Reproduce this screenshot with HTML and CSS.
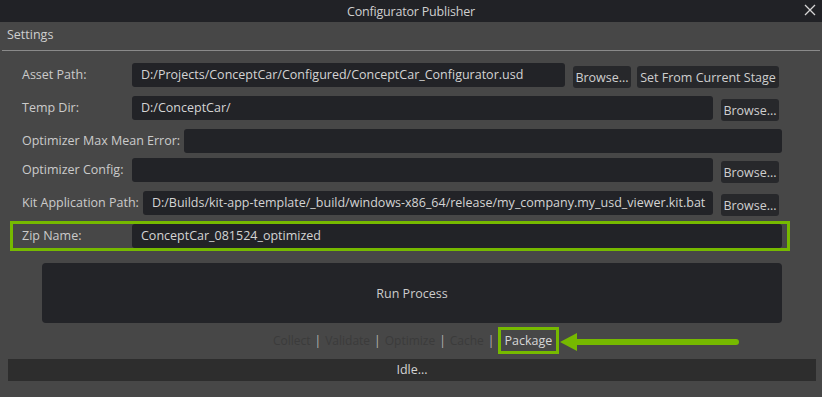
FILE: index.html
```html
<!DOCTYPE html>
<html>
<head>
<meta charset="utf-8">
<link rel="stylesheet" href="styles.css">
</head>
<body>
<div class="window">
  <div class="titlebar">
    <span class="title">Configurator Publisher</span>
    <svg class="close" width="12" height="12" viewBox="0 0 12 12"><path d="M1 1 L11 11 M11 1 L1 11" stroke="#d6d6d6" stroke-width="1.3" fill="none"/></svg>
  </div>
  <div class="section-header">Settings</div>
  <div class="form">
    <div class="row">
      <span class="label">Asset Path:</span>
      <div class="field">D:/Projects/ConceptCar/Configured/ConceptCar_Configurator.usd</div>
      <button class="btn">Browse...</button>
      <button class="btn btn-wide">Set From Current Stage</button>
    </div>
    <div class="row">
      <span class="label">Temp Dir:</span>
      <div class="field">D:/ConceptCar/</div>
      <button class="btn">Browse...</button>
    </div>
    <div class="row row-tight">
      <span class="label">Optimizer Max Mean Error:</span>
      <div class="field field-full"></div>
    </div>
    <div class="row">
      <span class="label">Optimizer Config:</span>
      <div class="field"></div>
      <button class="btn">Browse...</button>
    </div>
    <div class="row row-before-zip">
      <span class="label">Kit Application Path:</span>
      <div class="field">D:/Builds/kit-app-template/_build/windows-x86_64/release/my_company.my_usd_viewer.kit.bat</div>
      <button class="btn">Browse...</button>
    </div>
    <div class="row zip-row">
      <span class="label">Zip Name:</span>
      <div class="field field-full">ConceptCar_081524_optimized</div>
    </div>
  </div>
  <div class="run-wrap">
    <div class="run">Run Process</div>
  </div>
  <div class="steps">
    <span class="step off">Collect</span>
    <span class="sep">|</span>
    <span class="step off">Validate</span>
    <span class="sep">|</span>
    <span class="step off">Optimize</span>
    <span class="sep">|</span>
    <span class="step off">Cache</span>
    <span class="sep">|</span>
    <span class="step active">Package</span>
    <svg class="arrow" width="180" height="20" viewBox="0 0 180 20"><polygon points="0,10 17,1 17,19" fill="#76b900"/><line x1="16" y1="10" x2="176" y2="10" stroke="#76b900" stroke-width="6" stroke-linecap="round"/></svg>
  </div>
  <div class="status">Idle...</div>
</div>
</body>
</html>
```
FILE: styles.css
```css
html, body {
  margin: 0;
  padding: 0;
  background: #474747;
}
body {
  font-family: "Open Sans", "Noto Sans", sans-serif;
  font-size: 12.5px;
  color: #cfcfcf;
  width: 822px;
  height: 397px;
  overflow: hidden;
}
.window {
  display: flex;
  flex-direction: column;
}
.titlebar {
  height: 22px;
  background: #212226;
  display: flex;
  align-items: center;
  justify-content: center;
  position: relative;
}
.title {
  font-size: 12.5px;
  color: #cfcfcf;
  letter-spacing: -0.2px;
}
.close {
  position: absolute;
  right: 6px;
  top: 4px;
}
.section-header {
  height: 28px;
  line-height: 26px;
  border-bottom: 1px solid #8a8a8a;
  margin: 0 2px;
  padding-left: 5px;
}
.form {
  padding: 12px 40px 0 0;
  display: flex;
  flex-direction: column;
}
.row {
  display: flex;
  align-items: flex-start;
  height: 24px;
  margin-bottom: 9px;
  padding-left: 22px;
}
.row-tight { margin-bottom: 5px; }
.row-before-zip { margin-bottom: 6px; }
.label {
  min-width: 110px;
  box-sizing: border-box;
  padding-right: 4px;
  line-height: 24px;
  white-space: nowrap;
  color: #cbcbcb;
}
.field {
  flex: 1;
  height: 24px;
  line-height: 24px;
  background: #222327;
  border-radius: 3px;
  padding-left: 9px;
  margin-right: 8px;
  color: #d4d4d4;
  white-space: nowrap;
  overflow: hidden;
}
.field-full { margin-right: 0; }
.btn {
  font-family: inherit;
  font-size: 12.5px;
  color: #cfcfcf;
  background: #27282b;
  border: none;
  border-radius: 3px;
  height: 22px;
  width: 58px;
  padding: 0;
  margin-top: 3px;
  margin-right: 3px;
}
.row .btn + .btn { margin-left: 3px; }
.btn-wide { width: 142px; }
.zip-row {
  margin: 0 -8px 0 10px;
  border: 3px solid #76b900;
  padding-left: 9px;
  padding-right: 5px;
}
.zip-row .field { margin-right: 0; }
.run-wrap {
  padding: 12px 40px 0 42px;
}
.run {
  height: 60px;
  background: #232428;
  border-radius: 4px;
  display: flex;
  align-items: center;
  justify-content: center;
  color: #cccccc;
}
.steps {
  display: flex;
  align-items: center;
  height: 27px;
  margin-top: 4px;
  padding-left: 273px;
  gap: 4px;
  position: relative;
  font-size: 12px;
}
.step.off { color: #3b3b3b; }
.sep { color: #b4b4b4; margin-top: -1px; }
.step.active {
  border: 3px solid #76b900;
  height: 21px;
  line-height: 21px;
  padding: 0 4px 0 3px;
  color: #d6d6d6;
  margin-left: 0;
  font-size: 12.5px;
}
.arrow {
  position: absolute;
  left: 560px;
  top: 5px;
}
.status {
  margin: 5px 6px 0 8px;
  height: 22px;
  line-height: 22px;
  background: #2d2d2d;
  text-align: center;
  color: #d2d2d2;
}
```
